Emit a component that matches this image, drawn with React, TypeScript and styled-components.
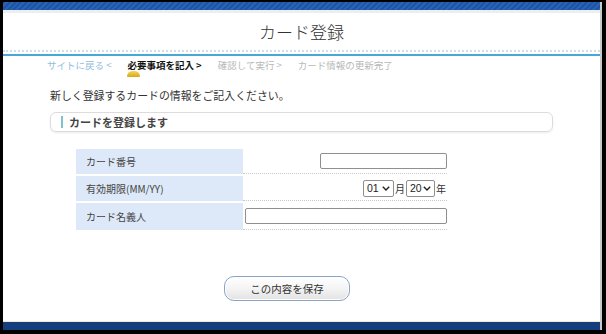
import React from 'react'
import styled, { createGlobalStyle } from 'styled-components'

const GlobalStyle = createGlobalStyle`
  html, body {
    margin: 0;
    padding: 0;
    background: #000;
    font-family: "Noto Sans CJK JP", "Noto Sans", sans-serif;
    color: #333;
  }
`

const Frame = styled.div`
  width: 606px;
  height: 334px;
  padding: 2px 4px 4px 3px;
  box-sizing: border-box;
`

const Page = styled.div`
  height: 100%;
  background: #fff;
  border-right: 2px solid #c9c9c9;
  display: flex;
  flex-direction: column;
`

const TopBar = styled.div`
  height: 8px;
  background: repeating-linear-gradient(
    135deg,
    #1c55a6 0px,
    #1c55a6 2px,
    #2a63b2 2px,
    #2a63b2 4px
  );
`

const Strip = styled.div`
  height: 3px;
  background: #eaeff4;
`

const TitleBlock = styled.div`
  height: 37px;
  display: flex;
  align-items: center;
  justify-content: center;
  border-bottom: 2px dotted #cddfe8;
`

const Title = styled.h1`
  margin: 0;
  font-size: 17px;
  font-weight: 300;
  color: #333;
`

const Rule = styled.div`
  margin-top: 2px;
  height: 2px;
  background: #4aa8d9;
`

const Crumbs = styled.nav`
  display: flex;
  align-items: center;
  height: 16px;
  margin-top: 1px;
  padding-left: 44px;
  gap: 16px;
  font-size: 9.5px;
`

const Crumb = styled.span<{ $state: 'link' | 'active' | 'todo' }>`
  position: relative;
  white-space: nowrap;
  color: ${({ $state }) => ($state === 'link' ? '#8fbde0' : $state === 'active' ? '#111' : '#b8b8b8')};
  font-weight: ${({ $state }) => ($state === 'active' ? 700 : 400)};
`

const Marker = styled.span`
  position: absolute;
  left: 0;
  top: 13px;
  width: 13px;
  height: 6px;
  border-radius: 7px 7px 1px 1px;
  background: linear-gradient(#f7d65a, #d9a718);
`

const Body = styled.div`
  flex: 1;
  display: flex;
  flex-direction: column;
  padding: 0 47px 0 47px;
`

const Intro = styled.p`
  margin: 14px 0 0 0;
  font-size: 10.9px;
  line-height: 16px;
  color: #333;
`

const SectionHead = styled.div`
  margin-top: 9px;
  height: 20px;
  border: 1px solid #dcdcdc;
  border-radius: 6px;
  box-shadow: 0 1px 2px rgba(0, 0, 0, 0.08);
  display: flex;
  align-items: center;
  padding-left: 10px;
  gap: 6px;
  box-sizing: border-box;
  font-size: 11px;
  font-weight: 700;
  color: #444;
`

const Accent = styled.span`
  width: 2px;
  height: 12px;
  background: #7cc2cf;
`

const FormTable = styled.div`
  margin: 17px 0 0 26px;
  display: grid;
  grid-template-columns: 167px 204px;
  row-gap: 2px;
`

const Label = styled.div<{ $h: number }>`
  height: ${({ $h }) => $h}px;
  background: #dde9f8;
  display: flex;
  align-items: center;
  padding-left: 10px;
  font-size: 10px;
  color: #444;
`

const Value = styled.div<{ $h: number }>`
  height: ${({ $h }) => $h}px;
  border-bottom: 1px dotted #c8c8c8;
  box-sizing: border-box;
  display: flex;
  align-items: center;
  justify-content: flex-end;
  font-size: 10px;
  color: #333;
`

const TextInput = styled.input<{ $w: number }>`
  width: ${({ $w }) => $w}px;
  height: 16px;
  box-sizing: border-box;
  border: 1px solid #8f8f8f;
  border-radius: 2px;
  padding: 0 3px;
  font-size: 10px;
  background: #fff;
`

const SelectWrap = styled.span`
  position: relative;
  display: inline-flex;
`

const Select = styled.select<{ $w: number }>`
  appearance: none;
  width: ${({ $w }) => $w}px;
  height: 17px;
  box-sizing: border-box;
  font-size: 10.5px;
  padding: 0 0 0 3px;
  border: 1px solid #8f8f8f;
  border-radius: 2px;
  background: #fff;
  color: #222;
  font-family: "Liberation Sans", Arial, sans-serif;
`

const Chevron = styled.svg`
  position: absolute;
  right: 4px;
  top: 6px;
  width: 8px;
  height: 5px;
  pointer-events: none;
`

const Unit = styled.span`
  margin: 0 1px;
  font-size: 10px;
`

const Actions = styled.div`
  display: flex;
  justify-content: center;
  margin-top: 46px;
  padding-right: 29px;
`

const SaveButton = styled.button`
  width: 126px;
  height: 25px;
  border: 1px solid #8aa4c6;
  border-radius: 10px;
  background: linear-gradient(#ffffff 0%, #f4f4f4 50%, #e2e2e2 100%);
  box-shadow: inset 0 0 0 1px #fff;
  font-family: "Noto Sans CJK JP", sans-serif;
  font-size: 10.5px;
  color: #333;
`

const BottomBar = styled.div`
  height: 8px;
  background: #143f7c;
  border-top: 1px solid #f2ead0;
`

function Dropdown({ width, value, options }: { width: number; value: string; options: string[] }) {
  return (
    <SelectWrap>
      <Select $w={width} defaultValue={value}>
        {options.map((o) => (
          <option key={o}>{o}</option>
        ))}
      </Select>
      <Chevron viewBox="0 0 8 5">
        <path d="M0.8 0.8 L4 4 L7.2 0.8" fill="none" stroke="#222" strokeWidth="1.4" />
      </Chevron>
    </SelectWrap>
  )
}

export default function App() {
  return (
    <>
      <GlobalStyle />
      <Frame>
        <Page>
          <TopBar />
          <Strip />
          <TitleBlock>
            <Title>カード登録</Title>
          </TitleBlock>
          <Rule />
          <Crumbs>
            <Crumb $state="link">サイトに戻る &lt;</Crumb>
            <Crumb $state="active">
              必要事項を記入 &gt;
              <Marker />
            </Crumb>
            <Crumb $state="todo">確認して実行 &gt;</Crumb>
            <Crumb $state="todo">カード情報の更新完了</Crumb>
          </Crumbs>
          <Body>
            <Intro>新しく登録するカードの情報をご記入ください。</Intro>
            <SectionHead>
              <Accent />
              カードを登録します
            </SectionHead>
            <FormTable>
              <Label $h={25}>カード番号</Label>
              <Value $h={25}>
                <TextInput $w={127} type="text" />
              </Value>
              <Label $h={25}>有効期限(MM/YY)</Label>
              <Value $h={25}>
                <Dropdown width={31} value="01" options={['01', '02', '03', '12']} />
                <Unit>月</Unit>
                <Dropdown width={29} value="20" options={['20', '21', '22']} />
                <Unit>年</Unit>
              </Value>
              <Label $h={27}>カード名義人</Label>
              <Value $h={27}>
                <TextInput $w={202} type="text" />
              </Value>
            </FormTable>
            <Actions>
              <SaveButton>この内容を保存</SaveButton>
            </Actions>
          </Body>
          <BottomBar />
        </Page>
      </Frame>
    </>
  )
}
